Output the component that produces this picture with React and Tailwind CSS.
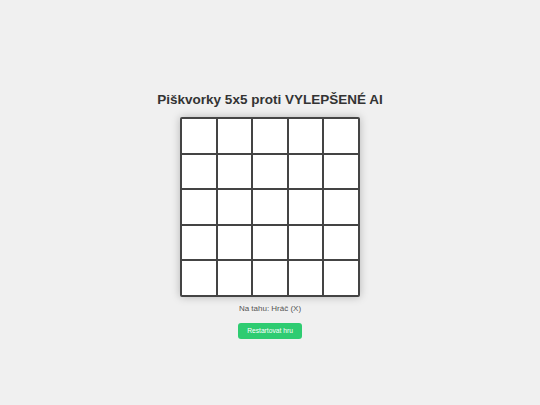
export default function App() {
  const cells = Array.from({ length: 25 })
  return (
    <div
      className="min-h-screen w-full bg-[#f0f0f0] flex flex-col items-center pt-[92px]"
      style={{ fontFamily: '"Liberation Sans", Arial, sans-serif' }}
    >
      <h1 className="text-[13.5px] leading-[16px] font-bold text-[#333]">Piškvorky 5x5 proti VYLEPŠENÉ AI</h1>

      {/* Board */}
      <div className="mt-[9px] w-[180px] h-[180px] p-[2px] grid grid-cols-5 grid-rows-5 gap-[2px] bg-[#444] rounded-[2px] shadow-[0_0_8px_rgba(0,0,0,0.25)]">
        {cells.map((_, i) => (
          <div key={i} className="bg-white" />
        ))}
      </div>

      <p className="mt-[7px] text-[8px] leading-[10px] text-[#555]">Na tahu: Hráč (X)</p>

      <button className="mt-[9px] h-[16px] px-[9px] bg-[#2ecc71] text-white text-[6.7px] leading-none rounded-[3px]">
        Restartovat hru
      </button>
    </div>
  )
}
